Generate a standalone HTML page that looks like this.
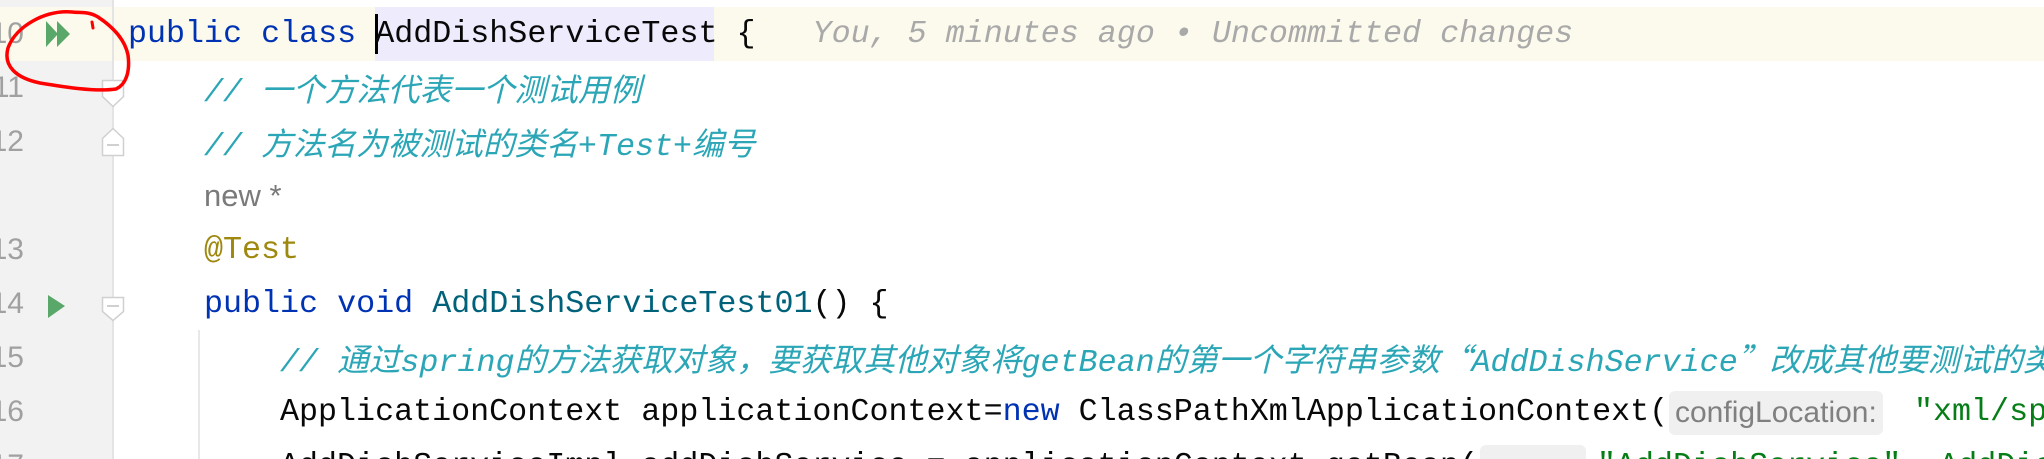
<!DOCTYPE html>
<html><head><meta charset="utf-8"><style>
html,body{margin:0;padding:0;width:2044px;height:459px;overflow:hidden;}
body{background:#fff;position:relative;font-family:"Liberation Mono","Noto Sans CJK SC",monospace;}
.gut{position:absolute;left:0;top:0;width:112px;height:459px;background:#f2f2f2;}
.gline{position:absolute;left:112px;top:0;width:2px;height:459px;background:#e4e4e4;}
.hl{position:absolute;left:0;top:7px;width:2044px;height:54px;background:#fcfaed;}
.sel{position:absolute;left:375px;top:7px;width:339px;height:54px;background:#edebfc;}
.ln{position:absolute;left:-40px;width:64px;text-align:right;font-family:"Liberation Sans",sans-serif;font-size:30px;color:#a0a0a0;line-height:54px;}
.l{position:absolute;white-space:pre;font-size:31.7px;line-height:54px;color:#080808;}
.kw{color:#0033b3}.fn{color:#00627a}.an{color:#9e880d}.str{color:#067d17}
.cm{color:#2ba6b6;font-style:italic}
.cj{font-family:"Noto Sans CJK SC",sans-serif;font-style:italic;}
.blame{color:#a9a9a9;font-style:italic}
.hint{position:absolute;background:#f0f0f0;border-radius:6px;color:#808080;font-family:"Liberation Sans",sans-serif;font-size:30px;line-height:44px;padding:0 6px;white-space:pre;overflow:hidden;}
</style></head><body>
<div class="gut"></div>
<div class="hl"></div>
<div class="gline"></div>
<div class="sel"></div>
<div style="position:absolute;left:198px;top:330px;width:2px;height:129px;background:#e8e8e8"></div>

<div class="ln" style="top:7px">10</div>
<div class="ln" style="top:61px">11</div>
<div class="ln" style="top:115px">12</div>
<div class="ln" style="top:223px">13</div>
<div class="ln" style="top:277px">14</div>
<div class="ln" style="top:331px">15</div>
<div class="ln" style="top:385px">16</div>
<div class="ln" style="top:439px">17</div>

<svg style="position:absolute;left:0;top:0" width="140" height="459">
<polygon points="46,21 58,34 46,47" fill="#59a869"/>
<polygon points="57,21 70,34 57,47" fill="#59a869"/>
<polygon points="48,295 65,306 48,318" fill="#59a869"/>
<path d="M102.5,80.5 h21 v16 l-10.5,10 l-10.5,-10 z" fill="#fff" stroke="#d0d0d0" stroke-width="1.5"/>
<path d="M102.5,155.5 h21 v-17 l-10.5,-10 l-10.5,10 z" fill="#fff" stroke="#d0d0d0" stroke-width="1.5"/>
<line x1="107" y1="145" x2="119" y2="145" stroke="#c0c0c0" stroke-width="1.5"/>
<path d="M102.5,297.5 h21 v14 l-10.5,9 l-10.5,-9 z" fill="#fff" stroke="#d0d0d0" stroke-width="1.5"/>
<line x1="107" y1="306" x2="119" y2="306" stroke="#c0c0c0" stroke-width="1.5"/>
<path d="M72,12 C45,10 16,26 8,48 C3,66 16,78 40,83 C64,87 95,92 116,89 C127,84 130,70 128,55 C125,40 113,27 98,17 C88,11 80,13 72,12" fill="none" stroke="#f00" stroke-width="3.5" stroke-linecap="round"/>
<path d="M92,22 L93,28" stroke="#f00" stroke-width="3" stroke-linecap="round"/>
</svg>
<div style="position:absolute;left:375px;top:14px;width:3px;height:40px;background:#000"></div>

<div class="l" style="left:128px;top:7px"><span class="kw">public class </span>AddDishServiceTest {   <span class="blame">You, 5 minutes ago • Uncommitted changes</span></div>
<div class="l cm" style="left:204px;top:61px">// <span class="cj">一个方法代表一个测试用例</span></div>
<div class="l cm" style="left:204px;top:115px">// <span class="cj">方法名为被测试的类名</span>+Test+<span class="cj">编号</span></div>
<div class="l" style="left:204px;top:169px;font-family:'Liberation Sans',sans-serif;font-size:31px;color:#7a7a7a">new *</div>
<div class="l an" style="left:204px;top:223px">@Test</div>
<div class="l" style="left:204px;top:277px"><span class="kw">public void </span><span class="fn">AddDishServiceTest01</span>() {</div>
<div class="l cm" style="left:280px;top:331px">// <span class="cj">通过</span>spring<span class="cj">的方法获取对象，要获取其他对象将</span>getBean<span class="cj">的第一个字符串参数“</span>AddDishService<span class="cj">”改成其他要测试的类</span></div>
<div class="l" style="left:280px;top:385px">ApplicationContext applicationContext=<span class="kw">new</span> ClassPathXmlApplicationContext(</div>
<div class="hint" style="left:1669px;top:391px">configLocation:</div>
<div class="l str" style="left:1914px;top:385px">"xml/spring.xml");</div>
<div class="l" style="left:280px;top:439px">AddDishServiceImpl addDishService = applicationContext.getBean(</div>
<div class="hint" style="left:1480px;top:445px;width:94px">name:</div>
<div class="l str" style="left:1597px;top:439px">"AddDishService", AddDishServiceImpl.class);</div>
</body></html>
